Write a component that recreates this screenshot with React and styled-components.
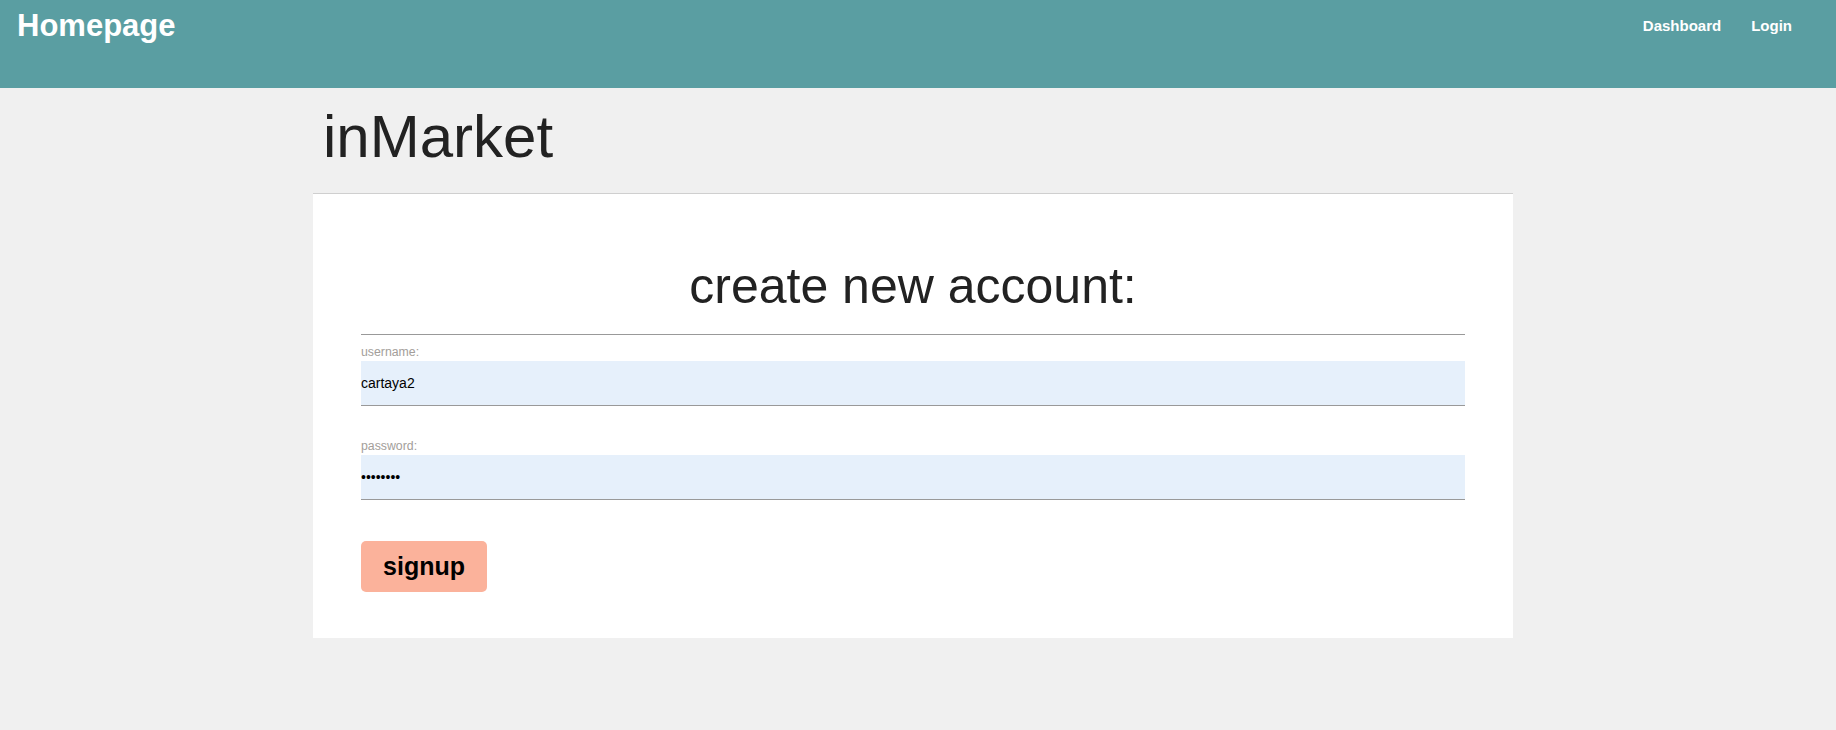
import React, { useState } from 'react';
import styled, { createGlobalStyle } from 'styled-components';

const GlobalStyle = createGlobalStyle`
  body {
    margin: 0;
    background: #f0f0f0;
    font-family: "Liberation Sans", Arial, sans-serif;
  }
`;

const Header = styled.header`
  height: 88px;
  background: #5a9ea2;
  display: flex;
  justify-content: space-between;
  align-items: flex-start;
  padding: 0 44px 0 17px;
  box-sizing: border-box;
`;

const Brand = styled.a`
  margin-top: 8px;
  font-size: 31px;
  line-height: 36px;
  font-weight: bold;
  color: #fff;
  text-decoration: none;
`;

const Nav = styled.nav`
  display: flex;
  gap: 30px;
  padding-top: 17px;
`;

const NavLink = styled.a`
  font-size: 15px;
  line-height: 17px;
  font-weight: bold;
  color: #fff;
  text-decoration: none;
`;

const Main = styled.main`
  width: 1210px;
  margin: 0 auto;
`;

const Title = styled.h1`
  margin: 14px 0 22px;
  padding-left: 10px;
  font-size: 60px;
  line-height: 69px;
  font-weight: normal;
  color: #222;
`;

const Card = styled.section`
  width: 1200px;
  box-sizing: border-box;
  background: #fff;
  border-top: 1px solid #cfcfcf;
  padding: 63px 48px 46px;
`;

const FormTitle = styled.h2`
  margin: 0;
  padding-bottom: 19px;
  border-bottom: 1px solid #999;
  text-align: center;
  font-size: 50px;
  line-height: 58px;
  font-weight: normal;
  color: #222;
`;

const Field = styled.div`
  display: flex;
  flex-direction: column;
  gap: 2px;
  margin-top: ${(p) => p.$top}px;
`;

const Label = styled.label`
  font-size: 12.3px;
  line-height: 14px;
  color: #a39e9a;
`;

const Input = styled.input`
  height: 45px;
  box-sizing: border-box;
  border: none;
  border-bottom: 1px solid #999;
  background: #e6f0fb;
  padding: 0;
  font-family: "Liberation Sans", Arial, sans-serif;
  font-size: 14px;
  color: #000;
  outline: none;
`;

const Button = styled.button`
  margin-top: 41px;
  width: 126px;
  height: 51px;
  border: none;
  border-radius: 5px;
  background: #fbb29b;
  font-family: "Liberation Sans", Arial, sans-serif;
  font-size: 25px;
  font-weight: bold;
  color: #000;
  cursor: pointer;
`;

const App = () => {
  const [username, setUsername] = useState('cartaya2');
  const [password, setPassword] = useState('password');

  return (
    <>
      <GlobalStyle />
      <Header>
        <Brand href="#">Homepage</Brand>
        <Nav>
          <NavLink href="#">Dashboard</NavLink>
          <NavLink href="#">Login</NavLink>
        </Nav>
      </Header>
      <Main>
        <Title>inMarket</Title>
        <Card>
          <FormTitle>create new account:</FormTitle>
          <Field $top={10}>
            <Label>username:</Label>
            <Input
              type="text"
              value={username}
              onChange={(e) => setUsername(e.target.value)}
            />
          </Field>
          <Field $top={33}>
            <Label>password:</Label>
            <Input
              type="password"
              value={password}
              onChange={(e) => setPassword(e.target.value)}
            />
          </Field>
          <Button type="submit">signup</Button>
        </Card>
      </Main>
    </>
  );
};

export default App;
